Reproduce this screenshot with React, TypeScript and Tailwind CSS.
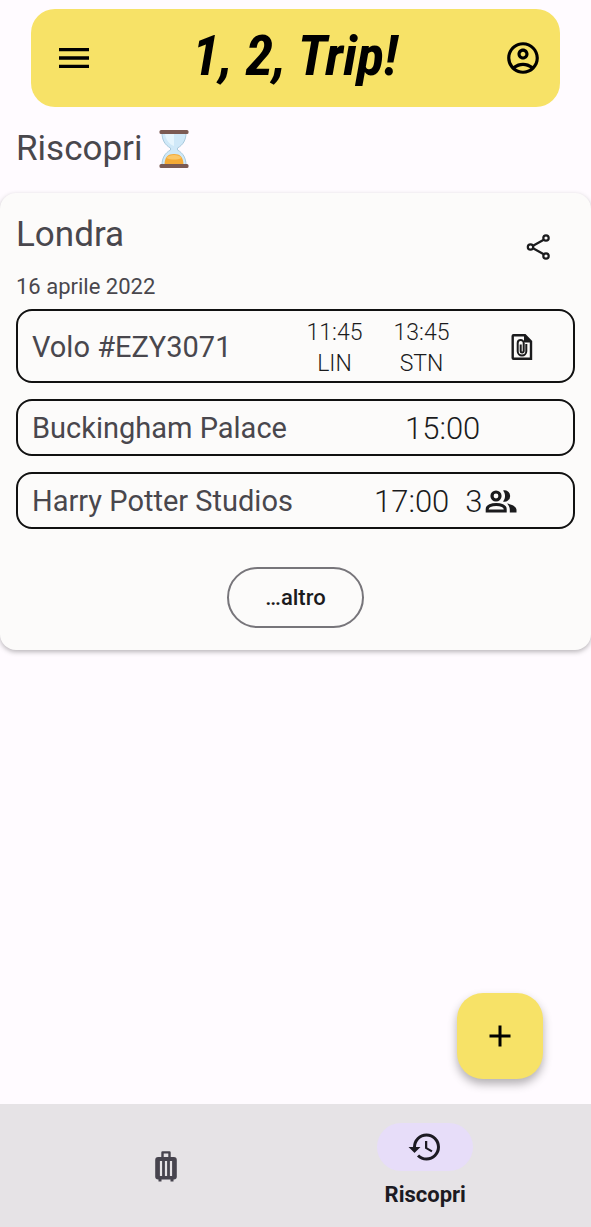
import type { ReactNode } from "react";
import { MdAdd, MdHistory, MdMenu, MdOutlineAccountCircle } from "react-icons/md";

function Hourglass() {
  return (
    <svg className="h-10 w-8" viewBox="0 0 32 40" role="img" aria-label="Clessidra">
      <path
        d="M4 4h24c0 7-3 12-8.500 15v2C25 24 28 29 28 36H4c0-7 3-12 8.500-15v-2C7 16 4 11 4 4z"
        fill="#cfe8f8"
        stroke="#a9c9dc"
        strokeWidth="1"
      />
      <path d="M7 5h9v12c-5-2-8-6-9-12z" fill="#e6f5fd" />
      <path d="M6.500 36c0-8 3.500-11 9.500-11s9.500 3 9.500 11z" fill="#f5aa35" />
      <path d="M8.500 29c2-4 13-4 15 0-4 2-11 2-15 0z" fill="#fbc768" />
      <rect x="1.500" y="1" width="29" height="4" rx="1.500" fill="#7b5a53" />
      <rect x="1.500" y="35" width="29" height="4" rx="1.500" fill="#7b5a53" />
    </svg>
  );
}

function ShareIcon() {
  return (
    <svg className="h-8 w-8" viewBox="0 0 32 32" fill="none" stroke="#1b1b1d" strokeWidth="2.200" aria-hidden="true">
      <path d="M10.500 14.500 21.200 8.500M10.500 17.500 21.200 23.500" />
      <circle cx="7.500" cy="16" r="2.700" />
      <circle cx="23" cy="7" r="2.700" />
      <circle cx="23" cy="25" r="2.700" />
    </svg>
  );
}

function AttachmentIcon() {
  return (
    <svg className="h-7 w-6" viewBox="0 0 24 28" fill="none" stroke="#1b1b1d" aria-hidden="true">
      <path d="M3.500 2.300H15l6 6.200v17.200H3.500a.8.8 0 0 1-.8-.8V3.100a.8.8 0 0 1 .8-.8z" strokeWidth="2.400" />
      <path d="M14.500 2v7H21z" fill="#1b1b1d" strokeWidth="1" />
      <path d="M16.300 11v7.300a4.300 4.300 0 0 1-8.600 0v-8.300a3 3 0 0 1 6 0v8a1.500 1.500 0 0 1-3 0V11.500" strokeWidth="2" />
    </svg>
  );
}

function PeopleIcon() {
  return (
    <svg className="h-7 w-8" viewBox="0 0 32 28" role="img" aria-label="persone">
      <circle cx="11" cy="8" r="4" fill="none" stroke="#1b1b1d" strokeWidth="3.200" />
      <path
        d="M2.200 23v-1.800c0-3 4.400-4.700 9-4.700s9 1.700 9 4.700V23z"
        fill="none"
        stroke="#1b1b1d"
        strokeWidth="3"
      />
      <path d="M18 2.500a5.700 5.700 0 1 1 0 11c2.700-3.200 2.700-7.800 0-11z" fill="#1b1b1d" />
      <path d="M22 15.500c5 .8 9.500 3 9.500 6.500v2.500h-6.700V22c0-2.800-1.200-5-2.800-6.500z" fill="#1b1b1d" />
    </svg>
  );
}

function SuitcaseIcon() {
  return (
    <svg className="h-8 w-6" viewBox="0 0 24 32" fill="none" aria-hidden="true">
      <path d="M8.500 8V2.400h7V8" stroke="#47444e" strokeWidth="2.400" strokeLinejoin="round" />
      <rect x="1.200" y="7" width="21.600" height="22.500" rx="3" fill="#47444e" />
      <path d="M7 11v15M12 11v15M17 11v15" stroke="#e6e3e6" strokeWidth="2.200" />
      <path d="M4.500 29h3v2.500h-3zM16.500 29h3v2.500h-3z" fill="#47444e" />
    </svg>
  );
}

function EventRow({ name, children }: { name: string; children: ReactNode }) {
  return (
    <li className="flex items-center justify-between rounded-2xl border-2 border-[#111111] pt-0.5 pl-3.5">
      <h3 className="text-[29px] leading-[51px] text-[#49474d]">{name}</h3>
      {children}
    </li>
  );
}

function Airport({ time, code }: { time: string; code: string }) {
  return (
    <div className="w-[87px] pt-1 pb-0.5 text-center text-[23px] leading-[31px] font-light text-[#1b1b1d]">
      <p>{time}</p>
      <p>{code}</p>
    </div>
  );
}

export default function App() {
  return (
    <div className="flex min-h-screen flex-col bg-[#fffbff] font-[Roboto,sans-serif] text-[#49474d]">
      <header className="mx-[31px] mt-[9px] flex h-[98px] items-center justify-between rounded-3xl bg-[#f7e267] pr-[18px] pl-[23px] text-black">
        <button type="button" aria-label="Menu">
          <MdMenu className="size-10" />
        </button>
        <h1 className="pr-2 pb-1 font-['Roboto_Condensed',Roboto,sans-serif] text-[56px] leading-none font-bold italic">
          1, 2, Trip!
        </h1>
        <button type="button" aria-label="Profilo">
          <MdOutlineAccountCircle className="size-[38px]" />
        </button>
      </header>

      <main className="flex flex-1 flex-col">
        <h2 className="flex items-center gap-4 px-4 pt-[22px] pb-6 text-[35px] leading-10">
          Riscopri
          <Hourglass />
        </h2>

        <section className="rounded-2xl bg-[#fcfbfa] px-4 py-[22px] shadow-[0_2px_5px_rgba(0,0,0,0.28)]">
          <div className="flex items-start justify-between pr-5">
            <h2 className="text-[35px] leading-10">Londra</h2>
            <button type="button" aria-label="Condividi" className="pt-4">
              <ShareIcon />
            </button>
          </div>
          <p className="pt-2 pb-1.5 text-[22px] leading-8">16 aprile 2022</p>
          <ul className="flex flex-col gap-4">
            <EventRow name="Volo #EZY3071">
              <div className="flex items-center">
                <Airport time="11:45" code="LIN" />
                <Airport time="13:45" code="STN" />
                <button type="button" aria-label="Allegato" className="flex w-[108px] justify-center pl-1.5">
                  <AttachmentIcon />
                </button>
              </div>
            </EventRow>
            <EventRow name="Buckingham Palace">
              <p className="w-[168px] text-[31px] leading-[51px] font-light text-[#1b1b1d]">15:00</p>
            </EventRow>
            <EventRow name="Harry Potter Studios">
              <div className="flex w-[199px] items-center gap-4 text-[31px] leading-[51px] font-light text-[#1b1b1d]">
                <p>17:00</p>
                <p className="flex items-center gap-0.5">
                  3<PeopleIcon />
                </p>
              </div>
            </EventRow>
          </ul>
          <button
            type="button"
            className="mx-auto mt-[38px] block rounded-full border-2 border-[#77757a] px-9 py-3.5 text-[22px] leading-[29px] font-medium text-[#1b1b1d]"
          >
            …altro
          </button>
        </section>

        <button
          type="button"
          aria-label="Aggiungi"
          className="mt-auto mr-12 mb-[25px] flex size-[86px] items-center justify-center self-end rounded-[26px] bg-[#f7e267] text-black shadow-[0_5px_10px_rgba(0,0,0,0.3)]"
        >
          <MdAdd className="size-9" />
        </button>
      </main>

      <nav className="grid h-[123px] grid-cols-[1fr_1fr] bg-[#e6e3e6] px-9">
        <a href="#viaggi" aria-label="Viaggi" className="flex items-center justify-center">
          <SuitcaseIcon />
        </a>
        <a href="#riscopri" aria-current="page" className="flex flex-col items-center gap-2 pt-[19px] text-[#1c1a22]">
          <span className="flex h-12 w-24 items-center justify-center rounded-full bg-[#e7ddf9]">
            <MdHistory className="size-9" />
          </span>
          <span className="text-[22px] leading-8 font-bold">Riscopri</span>
        </a>
      </nav>
    </div>
  );
}
